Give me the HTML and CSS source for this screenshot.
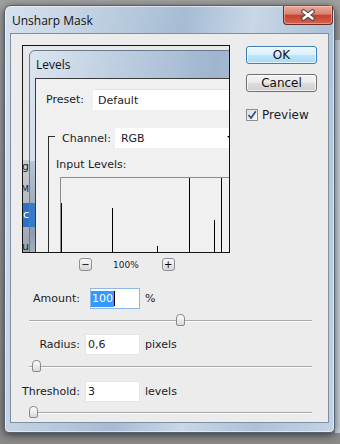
FILE: index.html
```html
<!DOCTYPE html>
<html lang="en">
  <head>
    <meta charset="UTF-8" />
    <meta name="viewport" content="width=device-width, initial-scale=1.0" />
    <title>Unsharp Mask</title>
    <link rel="stylesheet" href="styles.css">
  </head>
  <body>
    <div class="window">
      <div class="titlebar">
        <span class="title">Unsharp Mask</span>
        <div class="close-btn">
          <svg width="16" height="12" viewBox="0 0 16 12">
            <path d="M3.5 2.5 L12.5 9.5 M12.5 2.5 L3.5 9.5" stroke="#444" stroke-width="4.6" stroke-linecap="round" fill="none" />
            <path d="M3.5 2.5 L12.5 9.5 M12.5 2.5 L3.5 9.5" stroke="#fff" stroke-width="2.6" stroke-linecap="round" fill="none" />
          </svg>
        </div>
      </div>

      <div class="client">
        <div class="top">
          <div class="preview-col">
            <!-- preview image: a Levels dialog -->
            <div class="preview">
              <div class="ps-panel">
                <span class="ps-letter l-g">g</span>
                <span class="ps-letter l-m">M</span>
                <span class="ps-letter l-c">c</span>
                <span class="ps-letter l-u">u</span>
              </div>
              <div class="levels">
                <div class="levels-title">Levels</div>
                <div class="levels-client">
                  <div class="lv-row">
                    <span class="lv-label">Preset:</span>
                    <span class="lv-input">Default</span>
                  </div>
                  <div class="lv-group">
                    <span class="lv-group-line"></span>
                    <div class="lv-row lv-channel">
                      <span class="lv-label">Channel:</span>
                      <span class="lv-select">RGB<span class="lv-arrow"></span></span>
                    </div>
                    <div class="lv-caption">Input Levels:</div>
                    <div class="histogram">
                      <span class="bar" style="margin-left:0;height:55px"></span>
                      <span class="bar" style="margin-left:50px;height:50px"></span>
                      <span class="bar" style="margin-left:44px;height:12px"></span>
                      <span class="bar" style="margin-left:31px;height:80px"></span>
                      <span class="bar" style="margin-left:24px;height:38px"></span>
                      <span class="bar" style="margin-left:6px;height:80px"></span>
                    </div>
                  </div>
                </div>
              </div>
            </div>
            <div class="zoom-row">
              <span class="zoom-btn">&minus;</span>
              <span class="zoom-value">100%</span>
              <span class="zoom-btn">+</span>
            </div>
          </div>

          <div class="side">
            <div class="btn btn-default">OK</div>
            <div class="btn">Cancel</div>
            <div class="check">
              <span class="check-box">
                <svg width="10" height="10" viewBox="0 0 10 10">
                  <path d="M1.5 5 L4 8 L8.8 1.2" stroke="#3b4f8c" stroke-width="1.8" fill="none" />
                </svg>
              </span>
              <span>Preview</span>
            </div>
          </div>
        </div>

        <div class="field field-amount">
          <span class="field-label">Amount:</span>
          <span class="field-input focused"><span class="sel">100</span><span class="caret"></span></span>
          <span class="unit">%</span>
        </div>
        <div class="slider"><span class="thumb" style="margin-left:147px"></span></div>

        <div class="field field-radius">
          <span class="field-label">Radius:</span>
          <span class="field-input">0,6</span>
          <span class="unit">pixels</span>
        </div>
        <div class="slider slider-radius"><span class="thumb" style="margin-left:3px"></span></div>

        <div class="field field-threshold">
          <span class="field-label">Threshold:</span>
          <span class="field-input">3</span>
          <span class="unit">levels</span>
        </div>
        <div class="slider slider-threshold"><span class="thumb" style="margin-left:0"></span></div>
      </div>
    </div>
  </body>
</html>
```

FILE: styles.css
```css
body {
  margin: 0;
  width: 340px;
  height: 444px;
  overflow: hidden;
  background:
    linear-gradient(#c9d2dc, #c9d2dc) 335px 40px / 5px 393px no-repeat,
    linear-gradient(#a0a0a0, #8a8a8a);
  font-family: "DejaVu Sans", Verdana, sans-serif;
  font-size: 11px;
  color: #1b1b28;
}

/* Aero window */
.window {
  box-sizing: border-box;
  width: 331px;
  height: 428px;
  margin: 5px 0 0 4px;
  padding: 0 5px 9px 5px;
  border: 1px solid #55616e;
  border-radius: 7px 7px 5px 5px;
  background: linear-gradient(100deg, #d6e1ed 0%, #c3d2e3 20%, #a6bcd4 45%, #c9d7e7 62%, #adc2d8 80%, #c3d3e4 100%);
  box-shadow: inset 0 0 0 1px rgba(255, 255, 255, 0.55), 0 2px 9px rgba(0, 0, 0, 0.6);
  display: flex;
  flex-direction: column;
}
.titlebar {
  height: 27px;
  display: flex;
  align-items: flex-start;
}
.title {
  margin: 7px 0 0 2px;
  font-family: "Open Sans", sans-serif;
  font-size: 12px;
  line-height: 15px;
  color: #111;
}
.close-btn {
  box-sizing: border-box;
  margin-left: auto;
  margin-right: -4px;
  width: 50px;
  height: 19px;
  border: 1px solid #6a2c24;
  border-top: none;
  border-radius: 0 0 4px 4px;
  background: linear-gradient(#e9ab9e, #d98170 45%, #c4432e 52%, #d2644e 100%);
  box-shadow: inset 0 0 0 1px rgba(255, 200, 190, 0.5);
  display: flex;
  align-items: center;
  justify-content: center;
}

.client {
  flex: 1;
  background: #ececec;
  border: 1px solid #7d8fa3;
  padding: 11px 0 0 11px;
}
.top {
  display: flex;
}
.preview-col {
  width: 208px;
}
.preview {
  box-sizing: border-box;
  width: 208px;
  height: 208px;
  border: 1px solid #141414;
  overflow: hidden;
  background: #e8e8e8;
  display: flex;
  align-items: flex-start;
}

/* background panel seen at the left of the preview */
.ps-panel {
  width: 6px;
  flex: none;
  align-self: stretch;
  overflow: hidden;
  display: flex;
  flex-direction: column;
  padding-top: 114px;
  background: linear-gradient(#e8e8e8 114px, #c9ced4 114px, #9aa3ad);
  font-size: 11px;
  line-height: 14px;
  color: #222;
}
.ps-letter {
  display: block;
  direction: rtl;
  white-space: nowrap;
}
.l-m {
  margin-top: 8px;
  font-size: 9px;
}
.l-c {
  margin-top: 7px;
  height: 24px;
  line-height: 24px;
  background: #2f72c4;
  color: #fff;
}
.l-u {
  margin-top: 13px;
}

.levels {
  box-sizing: border-box;
  flex: none;
  width: 230px;
  height: 230px;
  margin-top: 4px;
  border: 1px solid #687a8e;
  border-radius: 6px 0 0 0;
  padding-left: 5px;
  background:
    linear-gradient(#3a78c8, #3a78c8) 0 152px / 5px 24px no-repeat,
    linear-gradient(#b7c4d2, #8d9cad 60%, #c3ced9) 0 110px / 5px 120px no-repeat,
    linear-gradient(100deg, #dbe5ef 0%, #bccde0 35%, #9fb5ce 70%, #b9cbdf 100%);
  display: flex;
  flex-direction: column;
}
.levels-title {
  height: 27px;
  line-height: 27px;
  padding-left: 1px;
  font-family: "Open Sans", sans-serif;
  font-size: 12px;
  color: #111;
}
.levels-client {
  flex: 1;
  background: #f0f0f0;
  border-left: 1px solid #3a3a3a;
  border-top: 1px solid #3a3a3a;
}
.lv-row {
  display: flex;
  align-items: center;
  height: 21px;
  margin-top: 10px;
  padding-left: 10px;
}
.lv-input {
  box-sizing: border-box;
  flex: none;
  width: 150px;
  height: 21px;
  margin-left: 9px;
  padding-left: 5px;
  line-height: 21px;
  background: #fff;
  border-top: 1px solid #e4e4e4;
}
.lv-group {
  margin: 26px 0 0 12px;
  height: 130px;
  border-left: 1px solid #2c2c2c;
}
.lv-group-line {
  display: block;
  width: 6px;
  height: 1px;
  background: #2c2c2c;
}
.lv-channel {
  margin-top: -9px;
  padding-left: 13px;
  height: 20px;
}
.lv-select {
  box-sizing: border-box;
  flex: none;
  display: flex;
  align-items: center;
  width: 123px;
  height: 20px;
  margin-left: 4px;
  padding: 0 3px 0 6px;
  background: #fff;
}
.lv-arrow {
  margin-left: auto;
  width: 0;
  height: 0;
  border-left: 4px solid transparent;
  border-right: 4px solid transparent;
  border-top: 4px solid #000;
}
.lv-caption {
  margin-top: 10px;
  padding-left: 7px;
  line-height: 14px;
}
.histogram {
  width: 200px;
  height: 80px;
  margin: 5px 0 0 11px;
  border-top: 1px solid #8c8c8c;
  border-left: 1px solid #8c8c8c;
  display: flex;
  align-items: flex-end;
}
.bar {
  width: 1px;
  flex: none;
  background: #000;
}

.zoom-row {
  display: flex;
  align-items: center;
  margin-top: 5px;
  padding-left: 57px;
  height: 13px;
}
.zoom-btn {
  box-sizing: border-box;
  width: 13px;
  height: 13px;
  border: 1px solid #8f8f8f;
  border-radius: 3px;
  background: linear-gradient(#fafafa, #d6d6d6);
  font-size: 10px;
  line-height: 11px;
  text-align: center;
  color: #000;
}
.zoom-value {
  margin: 0 23px 0 21px;
  font-size: 9px;
}

.side {
  margin-left: 16px;
  width: 71px;
  padding-top: 1px;
  display: flex;
  flex-direction: column;
}
.btn {
  box-sizing: border-box;
  height: 18px;
  border: 1px solid #707070;
  border-radius: 3px;
  background: linear-gradient(#f3f3f3 0%, #ebebeb 50%, #dddddd 50%, #cfcfcf 100%);
  box-shadow: inset 0 0 0 1px rgba(255, 255, 255, 0.7);
  text-align: center;
  line-height: 16px;
  font-size: 12px;
  color: #111;
}
.btn-default {
  border-color: #3c7fb1;
  background: linear-gradient(#eaf6fd 0%, #d9f0fc 50%, #bee6fd 50%, #a7d9f5 100%);
  margin-bottom: 10px;
}
.check {
  display: flex;
  align-items: center;
  margin-top: 16px;
  font-size: 12px;
}
.check-box {
  box-sizing: border-box;
  width: 12px;
  height: 12px;
  margin-right: 4px;
  border: 1px solid #8e8f8f;
  background: linear-gradient(135deg, #dcdcdc, #ffffff);
  display: flex;
  align-items: center;
  justify-content: center;
}

/* fields */
.field {
  display: flex;
  align-items: center;
  height: 21px;
}
.field-amount {
  margin-top: 17px;
}
.field-radius {
  margin-top: 7px;
}
.field-threshold {
  margin-top: 8px;
}
.field-label {
  width: 58px;
  text-align: right;
}
.field-input {
  box-sizing: border-box;
  display: flex;
  align-items: center;
  width: 55px;
  height: 21px;
  margin-left: 5px;
  padding-left: 2px;
  background: #fff;
  border: 1px solid #e6e6e6;
}
.field-input.focused {
  width: 50px;
  margin-left: 10px;
  padding-left: 0;
  border-color: #8db7e4;
}
.sel {
  background: #3399ff;
  color: #fff;
  line-height: 16px;
  padding: 0 1px;
}
.caret {
  width: 1px;
  height: 15px;
  background: #000;
}
.unit {
  margin-left: 5px;
}

.slider {
  width: 283px;
  height: 13px;
  margin: 5px 0 0 7px;
  background:
    linear-gradient(#a9a9a9, #a9a9a9) 0 6px / 100% 1px no-repeat,
    linear-gradient(#fdfdfd, #fdfdfd) 0 7px / 100% 1px no-repeat;
}
.slider-threshold {
  margin-top: 4px;
}
.thumb {
  box-sizing: border-box;
  display: block;
  width: 9px;
  height: 12px;
  border: 1px solid #8a8a8a;
  border-radius: 4px 4px 2px 2px;
  background: linear-gradient(#ffffff, #d8d8d8);
}
```
